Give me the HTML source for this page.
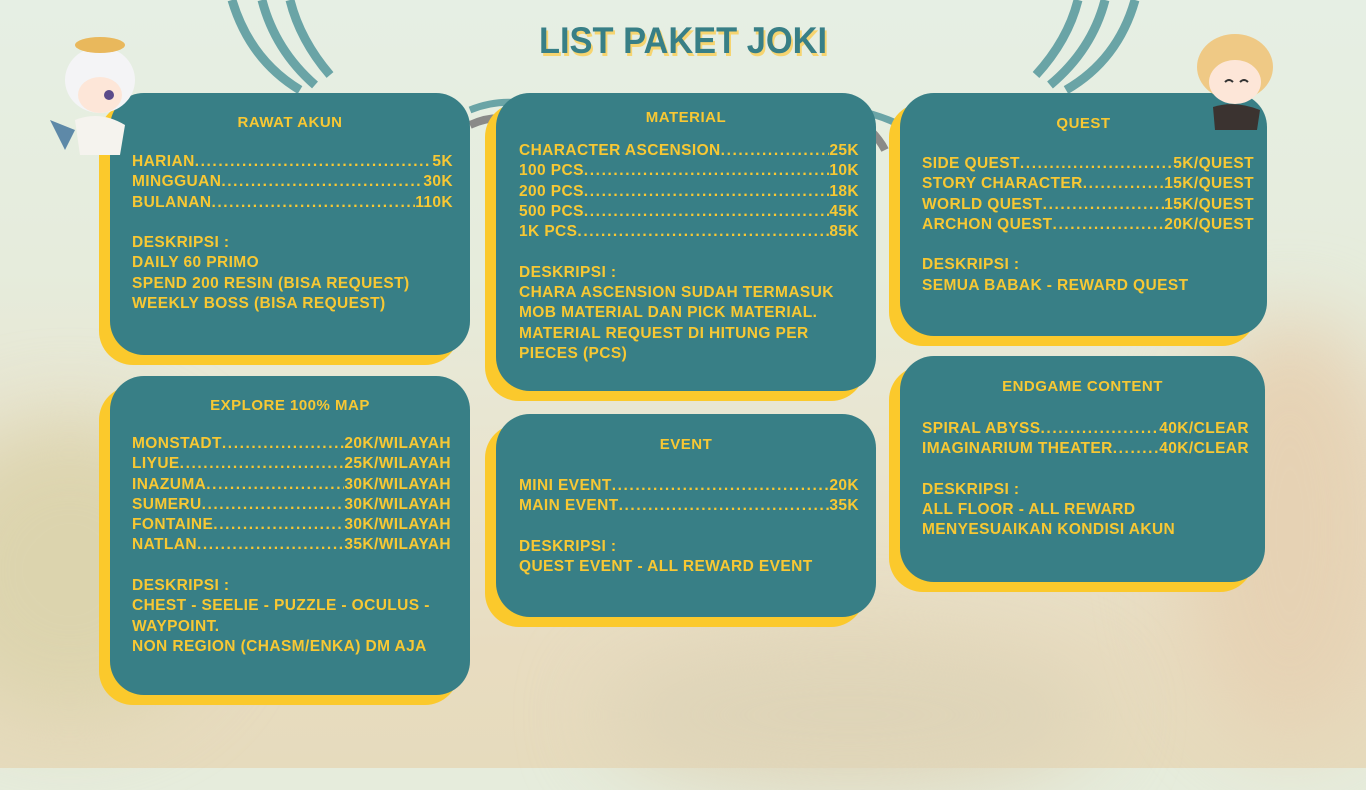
<!DOCTYPE html>
<html><head><meta charset="utf-8"><style>
*{margin:0;padding:0;box-sizing:border-box}
html{background:#e6ecdc}
body{width:1366px;height:768px;overflow:hidden;position:relative;font-family:"Liberation Sans",sans-serif;
background:linear-gradient(180deg,#e6efe4 0%,#e6ecdc 35%,#e9e4cf 60%,#e8dcc0 85%,#e6dbbd 100%)}
.blob{position:absolute;border-radius:50%;filter:blur(40px)}
.card{position:absolute;background:#387f86;border-radius:34px;box-shadow:-11px 10px 0 #fbc92c}
.t{position:absolute;color:#f8c833;font-weight:bold;font-size:15.5px;line-height:20.3px;letter-spacing:.4px;white-space:nowrap}
.h{position:absolute;color:#f8c833;font-weight:bold;font-size:15px;text-align:center;letter-spacing:.5px}
.r{display:flex}
.r .d{flex:1;overflow:hidden;white-space:nowrap;letter-spacing:1.6px}
.r .d:after{content:"......................................................................................................"}
</style></head><body>
<div class="blob" style="left:-80px;top:420px;width:300px;height:300px;background:#dcd4ae"></div>
<div class="blob" style="left:1180px;top:320px;width:220px;height:420px;background:#e6d2b4"></div>
<div class="blob" style="left:600px;top:640px;width:500px;height:150px;background:#ded4b8"></div>
<svg style="position:absolute;left:0;top:0" width="1366" height="768">
<g fill="none" stroke="#6aa4a6" stroke-width="9">
<path d="M232 0 Q250 60 300 90"/><path d="M262 0 Q275 50 315 85"/><path d="M290 0 Q300 40 330 75"/>
<path d="M1135 0 Q1118 60 1066 90"/><path d="M1105 0 Q1092 50 1050 85"/><path d="M1078 0 Q1068 40 1036 75"/>
<path d="M470 110 Q495 100 520 103" stroke-width="7"/><path d="M855 110 Q880 115 900 125" stroke-width="7"/>
</g>
<g fill="none" stroke="#8a8a88" stroke-width="8"><path d="M470 125 Q485 118 500 118"/><path d="M870 130 Q880 140 885 150"/></g>
</svg>
<div style="position:absolute;left:0;width:1366px;top:20px;text-align:center;font-size:37px;font-weight:bold;color:#387f86;letter-spacing:0;transform:scaleX(.93);text-shadow:2px 3px 0 #f6d470">LIST PAKET JOKI</div>

<div class="card" style="left:110px;top:93px;width:360px;height:262px"></div>
<div class="h" style="left:110px;width:360px;top:114px">RAWAT AKUN</div>
<div class="t" style="left:132px;top:152px;width:321px">
<div class="r"><span>HARIAN</span><span class="d"></span><span>5K</span></div>
<div class="r"><span>MINGGUAN</span><span class="d"></span><span>30K</span></div>
<div class="r"><span>BULANAN</span><span class="d"></span><span>110K</span></div>
<div>&nbsp;</div><div>DESKRIPSI :</div><div>DAILY 60 PRIMO</div><div>SPEND 200 RESIN (BISA REQUEST)</div><div>WEEKLY BOSS (BISA REQUEST)</div></div>

<div class="card" style="left:110px;top:376px;width:360px;height:319px"></div>
<div class="h" style="left:110px;width:360px;top:397px">EXPLORE 100% MAP</div>
<div class="t" style="left:132px;top:434px;width:319px">
<div class="r"><span>MONSTADT</span><span class="d"></span><span>20K/WILAYAH</span></div>
<div class="r"><span>LIYUE </span><span class="d"></span><span>25K/WILAYAH</span></div>
<div class="r"><span>INAZUMA </span><span class="d"></span><span>30K/WILAYAH</span></div>
<div class="r"><span>SUMERU</span><span class="d"></span><span>30K/WILAYAH</span></div>
<div class="r"><span>FONTAINE</span><span class="d"></span><span>30K/WILAYAH</span></div>
<div class="r"><span>NATLAN </span><span class="d"></span><span>35K/WILAYAH</span></div>
<div>&nbsp;</div><div>DESKRIPSI :</div><div>CHEST - SEELIE - PUZZLE - OCULUS -</div><div>WAYPOINT.</div><div>NON REGION (CHASM/ENKA) DM AJA</div></div>

<div class="card" style="left:496px;top:93px;width:380px;height:298px"></div>
<div class="h" style="left:496px;width:380px;top:109px">MATERIAL</div>
<div class="t" style="left:519px;top:141px;width:340px">
<div class="r"><span>CHARACTER ASCENSION</span><span class="d"></span><span>25K</span></div>
<div class="r"><span>100 PCS</span><span class="d"></span><span>10K</span></div>
<div class="r"><span>200 PCS</span><span class="d"></span><span>18K</span></div>
<div class="r"><span>500 PCS</span><span class="d"></span><span>45K</span></div>
<div class="r"><span>1K PCS</span><span class="d"></span><span>85K</span></div>
<div>&nbsp;</div><div>DESKRIPSI :</div><div>CHARA ASCENSION SUDAH TERMASUK</div><div>MOB MATERIAL DAN PICK MATERIAL.</div><div>MATERIAL REQUEST DI HITUNG PER</div><div>PIECES (PCS)</div></div>

<div class="card" style="left:496px;top:414px;width:380px;height:203px"></div>
<div class="h" style="left:496px;width:380px;top:436px">EVENT</div>
<div class="t" style="left:519px;top:476px;width:340px">
<div class="r"><span>MINI EVENT</span><span class="d"></span><span>20K</span></div>
<div class="r"><span>MAIN EVENT</span><span class="d"></span><span>35K</span></div>
<div>&nbsp;</div><div>DESKRIPSI :</div><div>QUEST EVENT - ALL REWARD EVENT</div></div>

<div class="card" style="left:900px;top:93px;width:367px;height:243px"></div>
<div class="h" style="left:900px;width:367px;top:115px">QUEST</div>
<div class="t" style="left:922px;top:154px;width:332px">
<div class="r"><span>SIDE QUEST</span><span class="d"></span><span>5K/QUEST</span></div>
<div class="r"><span>STORY CHARACTER</span><span class="d"></span><span>15K/QUEST</span></div>
<div class="r"><span>WORLD QUEST</span><span class="d"></span><span>15K/QUEST</span></div>
<div class="r"><span>ARCHON QUEST</span><span class="d"></span><span>20K/QUEST</span></div>
<div>&nbsp;</div><div>DESKRIPSI :</div><div>SEMUA BABAK - REWARD QUEST</div></div>

<div class="card" style="left:900px;top:356px;width:365px;height:226px"></div>
<div class="h" style="left:900px;width:365px;top:378px">ENDGAME CONTENT</div>
<div class="t" style="left:922px;top:419px;width:327px">
<div class="r"><span>SPIRAL ABYSS</span><span class="d"></span><span>40K/CLEAR</span></div>
<div class="r"><span>IMAGINARIUM THEATER</span><span class="d"></span><span>40K/CLEAR</span></div>
<div>&nbsp;</div><div>DESKRIPSI :</div><div>ALL FLOOR - ALL REWARD</div><div>MENYESUAIKAN KONDISI AKUN</div></div>

<svg style="position:absolute;left:45px;top:25px" width="110" height="140">
<ellipse cx="55" cy="55" rx="35" ry="33" fill="#f4f4f6"/>
<ellipse cx="55" cy="20" rx="25" ry="8" fill="#e9b85c"/>
<ellipse cx="55" cy="70" rx="22" ry="18" fill="#fde6d8"/>
<circle cx="64" cy="70" r="5" fill="#5b4b8a"/>
<path d="M30 95 Q55 85 80 100 L75 130 L35 130Z" fill="#f5f3ee"/>
<path d="M5 95 L30 105 L20 125Z" fill="#5e89a8"/>
</svg>
<svg style="position:absolute;left:1185px;top:22px" width="100" height="110">
<ellipse cx="50" cy="45" rx="38" ry="33" fill="#efc985"/>
<ellipse cx="50" cy="60" rx="26" ry="22" fill="#fde6d8"/>
<path d="M28 85 Q50 78 75 88 L72 108 L30 108Z" fill="#3b3330"/>
<path d="M40 60 q4 -4 8 0 M55 60 q4 -4 8 0" stroke="#333" stroke-width="2" fill="none"/>
</svg>
</body></html>
